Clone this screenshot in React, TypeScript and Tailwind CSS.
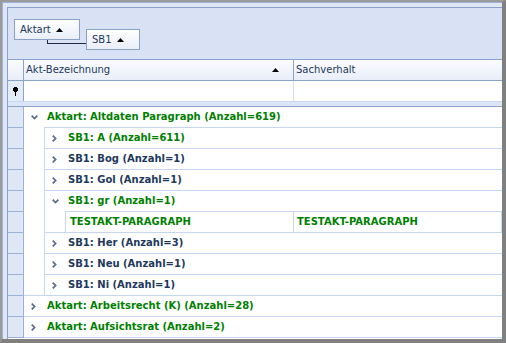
type Row = {
  label: string;
  tone: "green" | "navy";
  open?: boolean;
  children?: Row[];
  data?: [string, string];
};

// grouped grid content
const groups: Row[] = [
  {
    label: "Aktart: Altdaten Paragraph (Anzahl=619)",
    tone: "green",
    open: true,
    children: [
      { label: "SB1: A (Anzahl=611)", tone: "green" },
      { label: "SB1: Bog (Anzahl=1)", tone: "navy" },
      { label: "SB1: Gol (Anzahl=1)", tone: "navy" },
      {
        label: "SB1: gr (Anzahl=1)",
        tone: "green",
        open: true,
        data: ["TESTAKT-PARAGRAPH", "TESTAKT-PARAGRAPH"],
      },
      { label: "SB1: Her (Anzahl=3)", tone: "navy" },
      { label: "SB1: Neu (Anzahl=1)", tone: "navy" },
      { label: "SB1: Ni (Anzahl=1)", tone: "navy" },
    ],
  },
  { label: "Aktart: Arbeitsrecht (K) (Anzahl=28)", tone: "green" },
  { label: "Aktart: Aufsichtsrat (Anzahl=2)", tone: "green" },
];

const SortUp = () => (
  <svg width="7" height="4" viewBox="0 0 7 4" className="shrink-0">
    <path d="M3.5 0 L7 4 L0 4 Z" fill="#000" />
  </svg>
);

const Chevron = ({ open }: { open: boolean }) =>
  open ? (
    <svg width="7" height="5" viewBox="0 0 7 5">
      <path d="M0.7 0.7 L3.5 3.6 L6.3 0.7" stroke="#5a6a88" strokeWidth="1.7" fill="none" />
    </svg>
  ) : (
    <svg width="5" height="7" viewBox="0 0 5 7">
      <path d="M0.7 0.7 L3.6 3.5 L0.7 6.3" stroke="#5a6a88" strokeWidth="1.7" fill="none" />
    </svg>
  );

const Pin = () => (
  <svg width="5" height="9" viewBox="0 0 5 9">
    <rect x="1" y="0" width="3" height="1" fill="#000" />
    <rect x="0" y="1" width="5" height="3" fill="#000" />
    <rect x="1" y="4" width="3" height="1" fill="#000" />
    <rect x="2" y="5" width="1" height="4" fill="#000" />
  </svg>
);

function GroupRow({ row, first }: { row: Row; first?: boolean }) {
  const color = row.tone === "green" ? "text-[#008000]" : "text-[#1e395b]";
  return (
    <div>
      <div
        className={`flex items-center border-[#c6d6f1] ${
          first ? "h-[20px]" : "h-[21px] border-t"
        }`}
      >
        <span className="flex w-[23px] shrink-0 pl-[7px]">
          <Chevron open={!!row.open} />
        </span>
        <span className={`font-bold ${color}`}>{row.label}</span>
      </div>

      {row.open && row.children && (
        <div className="ml-[20px] border-l border-[#c6d6f1]">
          {row.children.map((c) => (
            <GroupRow key={c.label} row={c} />
          ))}
        </div>
      )}

      {row.open && row.data && (
        <div className="ml-[20px] border-l border-[#c6d6f1]">
          <div className="flex h-[21px] items-center border-t border-r border-[#c6d6f1] font-bold text-[#008000]">
            <div className="flex h-full w-[228px] items-center border-r border-[#c6d6f1] pl-[4px]">
              {row.data[0]}
            </div>
            <div className="pl-[3px]">{row.data[1]}</div>
          </div>
        </div>
      )}
    </div>
  );
}

export default function App() {
  const indicatorCells = Array.from({ length: 11 });

  return (
    <div className="h-[343px] w-[506px] border-t-2 border-l-2 border-r-4 border-b-4 border-t-[#9a9a9a] border-l-[#9a9a9a] border-r-[#808080] border-b-[#808080] bg-white font-['DejaVu_Sans',sans-serif] text-[10px] leading-none">
      <div className="h-full border-l border-t border-[#9fb2d6] bg-[#dfe7f7] pl-[4px] pt-[4px]">
        <div className="h-full border-l border-t border-[#8ba0c6] bg-white">
          {/* Group by panel */}
          <div className="flex h-[51px] items-start bg-[#d9e2f5] pl-[6px] pt-[11px] text-[#1e395b]">
            <div className="flex h-[21px] w-[66px] items-center border border-[#8ba2c8] bg-linear-to-b from-[#ffffff] to-[#e9eef9] pl-[5px]">
              <span className="w-[36px]">Aktart</span>
              <SortUp />
            </div>
            <div className="-ml-[33px] mt-[21px] h-[4px] w-[39px] shrink-0 border-b border-l border-[#1e2a44]" />
            <div className="mt-[10px] flex h-[21px] w-[54px] items-center border border-[#8ba2c8] bg-linear-to-b from-[#ffffff] to-[#e9eef9] pl-[5px]">
              <span className="w-[25px]">SB1</span>
              <SortUp />
            </div>
          </div>

          {/* Column headers */}
          <div className="flex h-[22px] border-y border-[#8ba3c9] bg-linear-to-b from-[#fbfcff] to-[#e8eef9] text-[#1e395b]">
            <div className="w-[16px] shrink-0 border-r border-[#8ba3c9]" />
            <div className="flex w-[270px] shrink-0 items-center justify-between border-r border-[#8ba3c9] pl-[2px] pr-[14px]">
              <span>Akt-Bezeichnung</span>
              <SortUp />
            </div>
            <div className="flex flex-1 items-center pl-[2px]">Sachverhalt</div>
          </div>

          {/* Auto filter row */}
          <div className="flex h-[21px] border-b border-[#c9d8f1]">
            <div className="flex w-[16px] shrink-0 items-center justify-center border-r border-[#8ba3c9] bg-[#e3eaf8]">
              <Pin />
            </div>
            <div className="w-[270px] shrink-0 border-r border-[#d0dcf2]" />
            <div className="flex-1" />
          </div>
          <div className="h-[5px] border-b border-[#8ea4cb] bg-[#dce5f7]" />

          {/* Grouped rows */}
          <div className="flex">
            <div className="w-[16px] shrink-0 border-r border-b border-[#9db1d6] bg-[#dfe7f7]">
              {indicatorCells.map((_, i) => (
                <div
                  key={i}
                  className={`border-[#9db1d6] ${i === 0 ? "h-[20px]" : "h-[21px] border-t"}`}
                />
              ))}
            </div>
            <div className="flex-1 border-b border-[#c6d6f1]">
              {groups.map((g, i) => (
                <GroupRow key={g.label} row={g} first={i === 0} />
              ))}
            </div>
          </div>
        </div>
      </div>
    </div>
  );
}
